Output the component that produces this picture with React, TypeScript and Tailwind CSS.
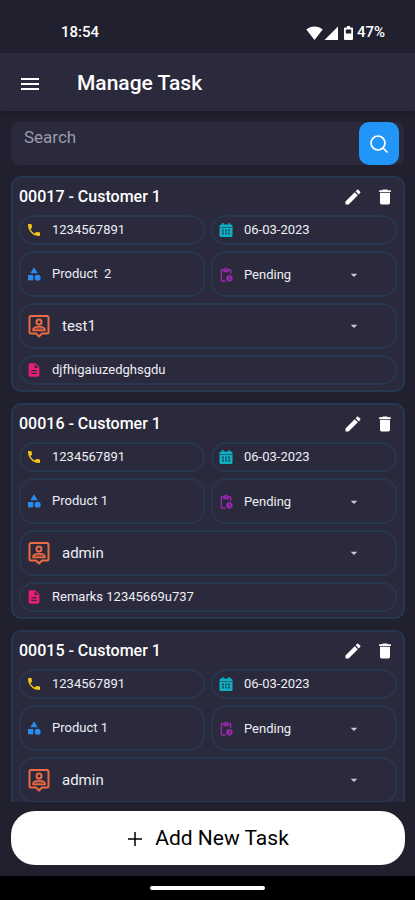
import type { ReactNode } from "react";
import {
  MdArrowDropDown,
  MdCategory,
  MdDelete,
  MdDescription,
  MdEdit,
  MdMenu,
  MdOutlinePendingActions,
  MdPhone,
} from "react-icons/md";

interface Task {
  id: string;
  customer: string;
  phone: string;
  date: string;
  product: string;
  status: string;
  assignee: string;
  remarks: string;
}

const tasks: Task[] = [
  {
    id: "00017",
    customer: "Customer 1",
    phone: "1234567891",
    date: "06-03-2023",
    product: "Product  2",
    status: "Pending",
    assignee: "test1",
    remarks: "djfhigaiuzedghsgdu",
  },
  {
    id: "00016",
    customer: "Customer 1",
    phone: "1234567891",
    date: "06-03-2023",
    product: "Product 1",
    status: "Pending",
    assignee: "admin",
    remarks: "Remarks 12345669u737",
  },
  {
    id: "00015",
    customer: "Customer 1",
    phone: "1234567891",
    date: "06-03-2023",
    product: "Product 1",
    status: "Pending",
    assignee: "admin",
    remarks: "",
  },
];

function CalendarIcon() {
  return (
    <svg viewBox="0 0 16 16" className="h-4 w-4 shrink-0">
      <path d="M4 1h1.500v1.500h5V1H12v1.500h1a1.500 1.500 0 0 1 1.500 1.500v9.500A1.500 1.500 0 0 1 13 15H3a1.500 1.500 0 0 1-1.500-1.500V4A1.500 1.500 0 0 1 3 2.500h1z" fill="#0fb0c4" />
      <path d="M1.500 5.500h13" stroke="#1b6478" strokeWidth="1" />
      <path d="M4 8.500h2m1 0h2m1 0h2M4 11.500h2m1 0h2m1 0h2" stroke="#1b5468" strokeWidth="1.800" />
    </svg>
  );
}

function PersonPinIcon() {
  return (
    <svg viewBox="0 0 24 24" className="h-6 w-6 shrink-0" fill="none" stroke="#ee6a42" strokeWidth="2" strokeLinejoin="round">
      <path d="M4 2h16a1.500 1.500 0 0 1 1.500 1.500V18a1.500 1.500 0 0 1-1.500 1.500h-5L12 22.500l-3-3H4A1.500 1.500 0 0 1 2.500 18V3.500A1.500 1.500 0 0 1 4 2z" />
      <circle cx="12" cy="8" r="2.500" />
      <path d="M6 16.500v-1c0-2 4-3 6-3s6 1 6 3v1z" fill="#ee6a42" fillOpacity="0.5" strokeWidth="1.600" />
    </svg>
  );
}

function Chip({ icon, children }: { icon: ReactNode; children: ReactNode }) {
  return (
    <div className="flex h-[30px] items-center gap-[10px] rounded-[15px] border-2 border-[#27374f] px-[5px] text-[13px] text-[#eeeef4]">
      {icon}
      <span className="whitespace-pre">{children}</span>
    </div>
  );
}

function TaskCard({ task }: { task: Task }) {
  return (
    <article className="shrink-0 rounded-[10px] border-2 border-[#27374f] bg-[#2a2a3c] px-[6px] pb-[5px]">
      <div className="flex h-[37px] items-center justify-between">
        <h2 className="text-base font-medium text-white">
          {task.id} - {task.customer}
        </h2>
        <div className="flex gap-3 pr-[2px] text-white">
          <button type="button" aria-label="Edit task">
            <MdEdit size={20} />
          </button>
          <button type="button" aria-label="Delete task">
            <MdDelete size={20} />
          </button>
        </div>
      </div>

      <div className="grid grid-cols-2 gap-[6px]">
        <Chip icon={<MdPhone size={16} className="text-[#f5c518]" />}>{task.phone}</Chip>
        <Chip icon={<CalendarIcon />}>{task.date}</Chip>

        <div className="flex h-[46px] items-center gap-[10px] rounded-[15px] border-2 border-[#27374f] px-[5px] text-[13px] text-[#eeeef4]">
          <MdCategory size={16} className="text-[#2b8cf0]" />
          <span className="whitespace-pre">{task.product}</span>
        </div>
        <label className="flex h-[46px] items-center gap-[10px] rounded-[15px] border-2 border-[#27374f] pt-px pr-[33px] pl-[5px] text-[13px] text-[#eeeef4]">
          <MdOutlinePendingActions size={16} className="text-[#9c27b0]" />
          <select aria-label="Status" defaultValue={task.status} className="min-w-0 flex-1 appearance-none bg-transparent outline-none">
            <option>Pending</option>
            <option>Completed</option>
          </select>
          <MdArrowDropDown size={16} className="text-[#c9c9d6]" />
        </label>

        <label className="col-span-2 flex h-[46px] items-center gap-[11px] rounded-[15px] border-2 border-[#27374f] pr-[33px] pl-[6px] text-[15px] text-[#eeeef4]">
          <PersonPinIcon />
          <select aria-label="Assigned to" defaultValue={task.assignee} className="min-w-0 flex-1 appearance-none bg-transparent outline-none">
            <option>admin</option>
            <option>test1</option>
          </select>
          <MdArrowDropDown size={16} className="text-[#c9c9d6]" />
        </label>

        <div className="col-span-2">
          <Chip icon={<MdDescription size={16} className="text-[#e91e73]" />}>{task.remarks}</Chip>
        </div>
      </div>
    </article>
  );
}

function StatusBar() {
  return (
    <div className="flex h-[53px] shrink-0 items-center justify-between pt-3 pr-[30px] pl-[61px] text-[15px] font-medium text-white">
      <span>18:54</span>
      <div className="flex items-center">
        <svg viewBox="0 0 17 14" className="h-[14px] w-[17px]" fill="currentColor">
          <path d="M8.500 14 0.300 3.600C2.600 1.600 5.400 0.500 8.500 0.500s5.900 1.100 8.200 3.100z" />
        </svg>
        <svg viewBox="0 0 14 14" className="ml-px h-[14px] w-[14px]" fill="currentColor">
          <path d="M14 0.500V14H0.500z" />
        </svg>
        <svg viewBox="0 0 9 14" className="mr-1 ml-[6px] h-[14px] w-[9px]" fill="currentColor">
          <path
            fillRule="evenodd"
            d="M3 0h3v1.500h2a1 1 0 0 1 1 1V13a1 1 0 0 1-1 1H1a1 1 0 0 1-1-1V2.500a1 1 0 0 1 1-1h2zM1.800 3.500v4h5.400v-4z"
          />
        </svg>
        <span>47%</span>
      </div>
    </div>
  );
}

export default function App() {
  return (
    <div className="flex h-screen flex-col bg-[#20202e] font-['Roboto',sans-serif]">
      <StatusBar />

      <header className="flex h-[58px] shrink-0 items-center gap-[35px] bg-[#2a2a3c] px-[18px] pt-[3px] text-white shadow-md">
        <button type="button" aria-label="Open menu">
          <MdMenu size={24} />
        </button>
        <h1 className="text-[21px] font-medium">Manage Task</h1>
      </header>

      <form className="mx-[11px] mt-[11px] flex h-[43px] shrink-0 rounded-lg bg-[#2a2a3c] pr-[5px]">
        <input
          type="search"
          aria-label="Search"
          placeholder="Search"
          className="min-w-0 flex-1 bg-transparent px-[13px] pb-[11px] text-[17px] text-white outline-none placeholder:text-[#9a9aac]"
        />
        <button
          type="button"
          aria-label="Search tasks"
          className="flex w-10 items-center justify-center rounded-[10px] bg-[#2196f8] text-white"
        >
          <svg viewBox="0 0 20 20" className="h-5 w-5" fill="none" stroke="currentColor" strokeWidth="1.700" strokeLinecap="round">
            <circle cx="9" cy="9" r="7" />
            <path d="m14.500 14.500 3.500 3.500" />
          </svg>
        </button>
      </form>

      <main className="mr-[10px] ml-[11px] mt-[11px] flex min-h-0 flex-1 flex-col gap-[11px] overflow-hidden">
        {tasks.map((task) => (
          <TaskCard key={task.id} task={task} />
        ))}
      </main>

      <div className="pt-[9px] pr-[10px] pb-[11px] pl-[11px]">
        <button
          type="button"
          className="flex h-[54px] w-full items-center justify-center gap-3 rounded-[24px] bg-white pt-px text-[21px] text-black"
        >
          <svg viewBox="0 0 16 16" className="h-4 w-4" fill="none" stroke="currentColor" strokeWidth="1.500">
            <path d="M8 1v14M1 8h14" />
          </svg>
          Add New Task
        </button>
      </div>

      <div className="flex h-6 shrink-0 items-center justify-center bg-black">
        <div className="h-1 w-[115px] rounded-full bg-white" />
      </div>
    </div>
  );
}
